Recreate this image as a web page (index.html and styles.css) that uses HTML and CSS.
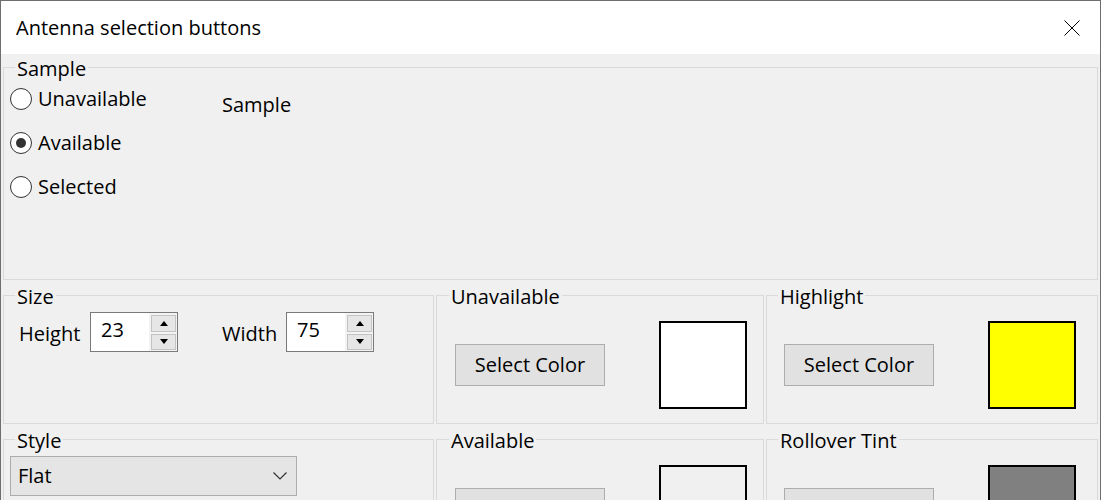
FILE: index.html
```html
<!DOCTYPE html>
<html lang="en">
<head>
<meta charset="utf-8">
<title>Antenna selection buttons</title>
<link rel="stylesheet" href="styles.css">
</head>
<body>
<div class="window">
  <div class="titlebar">
    <span class="title">Antenna selection buttons</span>
    <svg class="close" width="16" height="16" viewBox="0 0 16 16"><path d="M0.5 0.5 L15.5 15.5 M15.5 0.5 L0.5 15.5" stroke="#000" stroke-width="1" fill="none"/></svg>
  </div>
  <div class="client">
    <fieldset class="group sample">
      <legend>Sample</legend>
      <div class="sample-body">
        <div class="radios">
          <div class="radio"><span class="dot"></span><span>Unavailable</span></div>
          <div class="radio"><span class="dot checked"></span><span>Available</span></div>
          <div class="radio"><span class="dot"></span><span>Selected</span></div>
        </div>
        <div class="sample-label">Sample</div>
      </div>
    </fieldset>

    <fieldset class="group">
      <legend>Size</legend>
      <div class="size-body">
        <span class="field-label">Height</span>
        <div class="num">
          <span class="val">23</span>
          <span class="spin">
            <span class="spin-btn"><svg width="8" height="5" viewBox="0 0 8 5"><path d="M4 0 L8 5 L0 5 Z" fill="#000"/></svg></span>
            <span class="spin-btn"><svg width="8" height="5" viewBox="0 0 8 5"><path d="M0 0 L8 0 L4 5 Z" fill="#000"/></svg></span>
          </span>
        </div>
        <span class="field-label wide">Width</span>
        <div class="num">
          <span class="val">75</span>
          <span class="spin">
            <span class="spin-btn"><svg width="8" height="5" viewBox="0 0 8 5"><path d="M4 0 L8 5 L0 5 Z" fill="#000"/></svg></span>
            <span class="spin-btn"><svg width="8" height="5" viewBox="0 0 8 5"><path d="M0 0 L8 0 L4 5 Z" fill="#000"/></svg></span>
          </span>
        </div>
      </div>
    </fieldset>

    <fieldset class="group">
      <legend class="legend-mid">Unavailable</legend>
      <div class="color-body">
        <button class="btn">Select Color</button>
        <span class="swatch white"></span>
      </div>
    </fieldset>

    <fieldset class="group">
      <legend>Highlight</legend>
      <div class="color-body right">
        <button class="btn">Select Color</button>
        <span class="swatch yellow"></span>
      </div>
    </fieldset>

    <fieldset class="group">
      <legend>Style</legend>
      <div class="style-body">
        <div class="select">
          <span>Flat</span>
          <svg width="14" height="8" viewBox="0 0 14 8"><path d="M0.5 0.5 L7 7 L13.5 0.5" stroke="#333" stroke-width="1.2" fill="none"/></svg>
        </div>
      </div>
    </fieldset>

    <fieldset class="group">
      <legend class="legend-mid">Available</legend>
      <div class="color-body">
        <button class="btn">Select Color</button>
        <span class="swatch light"></span>
      </div>
    </fieldset>

    <fieldset class="group">
      <legend>Rollover Tint</legend>
      <div class="color-body right">
        <button class="btn">Select Color</button>
        <span class="swatch gray"></span>
      </div>
    </fieldset>
  </div>
</div>
</body>
</html>
```

FILE: styles.css
```css
html, body {
  margin: 0;
  padding: 0;
  background: #f0f0f0;
}

body {
  font-family: "Open Sans", "Noto Sans", sans-serif;
  font-size: 20px;
  color: #000;
}

.window {
  width: 1101px;
  height: 500px;
  box-sizing: border-box;
  border: 1px solid #6e6e6e;
  border-bottom: none;
  overflow: hidden;
  background: #f0f0f0;
}

.titlebar {
  height: 53px;
  background: #fff;
  display: flex;
  align-items: center;
  padding-left: 15px;
  padding-right: 20px;
}

.title {
  line-height: 53px;
  font-size: 20px;
}

.close {
  margin-left: auto;
  margin-top: 1px;
}

.client {
  display: grid;
  grid-template-columns: 431px 328px 332px;
  column-gap: 2px;
  row-gap: 2px;
  padding: 0 2px;
}

.group {
  margin: 0;
  padding: 0;
  border: 1px solid #dadada;
  min-width: 0;
}

.group legend {
  margin-left: 11px;
  padding: 3px 2px 0;
  line-height: 24px;
  font-size: 20px;
}

.group legend.legend-mid {
  margin-left: 12px;
}

.sample {
  grid-column: 1 / -1;
}

.sample-body {
  height: 198px;
  box-sizing: border-box;
  padding: 6px 0 0 6px;
  display: flex;
  align-items: flex-start;
}

.radios {
  width: 212px;
  display: flex;
  flex-direction: column;
  gap: 20px;
}

.radio {
  display: flex;
  align-items: center;
  gap: 6px;
  line-height: 24px;
}

.dot {
  width: 22px;
  height: 22px;
  box-sizing: border-box;
  border: 1.5px solid #333;
  border-radius: 50%;
  background: #fff;
  display: flex;
  align-items: center;
  justify-content: center;
}

.dot.checked::after {
  content: "";
  width: 10px;
  height: 10px;
  border-radius: 50%;
  background: #333;
}

.sample-label {
  margin-top: 6px;
  line-height: 24px;
}

.size-body {
  height: 114px;
  box-sizing: border-box;
  padding: 3px 0 0 15px;
  display: flex;
  align-items: flex-start;
}

.field-label {
  width: 71px;
  margin-top: 10px;
  line-height: 24px;
}

.field-label.wide {
  width: 64px;
  margin-left: 44px;
}

.num {
  width: 88px;
  height: 40px;
  box-sizing: border-box;
  border: 1px solid #7a7a7a;
  background: #fff;
  display: flex;
}

.num .val {
  flex: 1;
  padding: 5px 0 0 10px;
  line-height: 24px;
}

.spin {
  width: 28px;
  box-sizing: border-box;
  padding: 2px 1px 1px 2px;
  display: flex;
  flex-direction: column;
  gap: 2px;
  background: #f3f3f3;
}

.spin-btn {
  flex: 1;
  box-sizing: border-box;
  border: 1px solid #c3c3c3;
  background: #e6e6e6;
  display: flex;
  align-items: center;
  justify-content: center;
}

.color-body {
  height: 114px;
  box-sizing: border-box;
  padding: 12px 0 0 18px;
  display: flex;
  align-items: flex-start;
}

.color-body.right {
  padding-left: 17px;
}

.btn {
  width: 150px;
  height: 42px;
  margin-top: 23px;
  box-sizing: border-box;
  border: 1px solid #adadad;
  background: #e1e1e1;
  font-family: inherit;
  font-size: 20px;
  line-height: 24px;
  color: #000;
  padding: 0;
}

.swatch {
  width: 88px;
  height: 88px;
  margin-left: 54px;
  box-sizing: border-box;
  border: 2px solid #000;
}

.swatch.white { background: #ffffff; }
.swatch.yellow { background: #ffff00; }
.swatch.light { background: #f0f0f0; }
.swatch.gray { background: #808080; }

.style-body {
  height: 114px;
  box-sizing: border-box;
  padding: 3px 0 0 6px;
}

.select {
  width: 287px;
  height: 40px;
  box-sizing: border-box;
  border: 1px solid #adadad;
  background: #e5e5e5;
  display: flex;
  align-items: center;
  justify-content: space-between;
  padding: 0 9px 0 7px;
  line-height: 24px;
}
```
